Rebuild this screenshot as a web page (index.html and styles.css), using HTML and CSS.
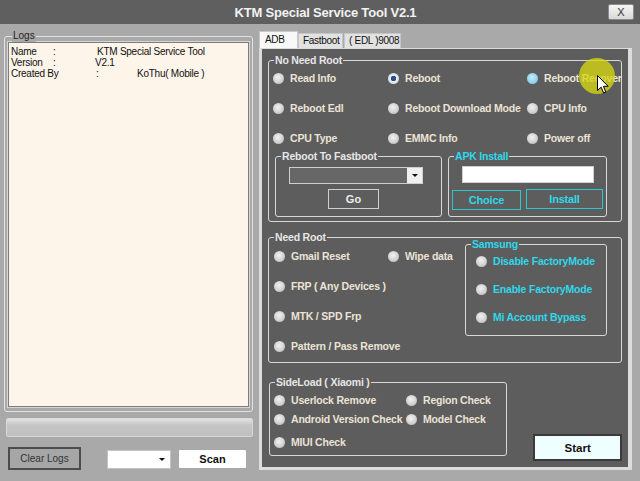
FILE: index.html
```html
<!DOCTYPE html>
<html>
<head>
<meta charset="utf-8">
<link rel="stylesheet" href="styles.css">
</head>
<body>
<div class="window">
  <div class="titlebar">
    <span class="title">KTM Special Service Tool V2.1</span>
    <div class="close">X</div>
  </div>
  <div class="main">
    <div class="left">
      <div class="logs-group">
        <span class="logs-legend">Logs</span>
        <div class="logs">
          <div class="lrow"><span class="w42">Name</span><span class="w44">:</span><span>KTM Special Service Tool</span></div>
          <div class="lrow"><span class="w42">Version</span><span class="w42">:</span><span>V2.1</span></div>
          <div class="lrow"><span class="w85">Created By</span><span class="w41">:</span><span>KoThu( Mobile )</span></div>
        </div>
      </div>
      <div class="progress"></div>
      <div class="bottombar">
        <div class="btn-clear">Clear Logs</div>
        <div class="combo-small"><span class="tri"></span></div>
        <div class="btn-scan">Scan</div>
      </div>
    </div>
    <div class="tabctl">
      <div class="tabstrip">
        <div class="tab active">ADB</div>
        <div class="tab t-fast">Fastboot</div>
        <div class="tab t-edl">( EDL )9008</div>
      </div>
      <div class="page">
        <div class="group g-nnr">
          <span class="legend">No Need Root</span>
          <div class="grid3">
            <div class="radio"><span class="rb"></span>Read Info</div>
            <div class="radio"><span class="rb sel"></span>Reboot</div>
            <div class="radio"><span class="rb hov"></span>Reboot Recover</div>
            <div class="radio"><span class="rb"></span>Reboot Edl</div>
            <div class="radio"><span class="rb"></span>Reboot Download Mode</div>
            <div class="radio"><span class="rb"></span>CPU Info</div>
            <div class="radio"><span class="rb"></span>CPU Type</div>
            <div class="radio"><span class="rb"></span>EMMC Info</div>
            <div class="radio"><span class="rb"></span>Power off</div>
          </div>
          <div class="subrow">
            <div class="group g-fast">
              <span class="legend">Reboot To Fastboot</span>
              <div class="combo"><span class="combo-btn"><span class="tri"></span></span></div>
              <div class="btn-go">Go</div>
            </div>
            <div class="group g-apk">
              <span class="legend cyan">APK Install</span>
              <div class="apk-input"></div>
              <div class="apk-btns">
                <div class="btn-cyan b-choice">Choice</div>
                <div class="btn-cyan b-install">Install</div>
              </div>
            </div>
          </div>
        </div>

        <div class="group g-root">
          <span class="legend">Need Root</span>
          <div class="root-list">
            <div class="rrow">
              <div class="radio c114"><span class="rb"></span>Gmail Reset</div>
              <div class="radio"><span class="rb"></span>Wipe data</div>
            </div>
            <div class="radio"><span class="rb"></span>FRP ( Any Devices )</div>
            <div class="radio"><span class="rb"></span>MTK / SPD Frp</div>
            <div class="radio"><span class="rb"></span>Pattern / Pass Remove</div>
          </div>
          <div class="group g-sam">
            <span class="legend cyan">Samsung</span>
            <div class="radio cyan"><span class="rb"></span>Disable FactoryMode</div>
            <div class="radio cyan"><span class="rb"></span>Enable FactoryMode</div>
            <div class="radio cyan"><span class="rb"></span>Mi Account Bypass</div>
          </div>
        </div>

        <div class="lastrow">
          <div class="group g-side">
            <span class="legend">SideLoad ( Xiaomi )</span>
            <div class="srow s1">
              <div class="radio c132"><span class="rb"></span>Userlock Remove</div>
              <div class="radio"><span class="rb"></span>Region Check</div>
            </div>
            <div class="srow s2">
              <div class="radio c132"><span class="rb"></span>Android Version Check</div>
              <div class="radio"><span class="rb"></span>Model Check</div>
            </div>
            <div class="srow s3">
              <div class="radio"><span class="rb"></span>MIUI Check</div>
            </div>
          </div>
          <div class="btn-start">Start</div>
        </div>
      </div>
    </div>
  </div>
  <div class="highlight"></div>
  <svg class="cursor" width="13" height="20" viewBox="0 0 13 20">
    <path d="M0.5 0.5 L0.5 15.5 L4.2 12.2 L6.6 18 L8.8 17 L6.4 11.3 L11.2 11.3 Z" fill="#fff" stroke="#000" stroke-width="1" stroke-linejoin="round"/>
  </svg>
</div>
</body>
</html>
```
FILE: styles.css
```css
* { box-sizing: border-box; margin: 0; padding: 0; }
body { width: 640px; height: 481px; overflow: hidden; font-family: "Liberation Sans", Arial, sans-serif; }

.window { position: relative; width: 640px; height: 481px; background: #a9a9a9; display: flex; flex-direction: column; }

.titlebar { height: 24px; flex: none; background: #5f5f5f; display: flex; align-items: center; padding-right: 6px; }
.title { flex: 1; text-align: center; padding-left: 43px; color: #f2f2f2; font-weight: bold; font-size: 13px; letter-spacing: -0.2px; }
.close { width: 26px; height: 16px; border: 1px solid #8c8c8c; border-radius: 2px; background: linear-gradient(#f6f6f6, #d8d8d8); font-size: 11px; color: #333; display: flex; align-items: center; justify-content: center; }

.main { flex: 1; display: flex; }

.left { width: 259px; flex: none; padding-left: 4px; padding-top: 12px; display: flex; flex-direction: column; }
.logs-group { position: relative; width: 249px; height: 376px; border: 1px solid #e2e2e2; border-radius: 3px; padding: 5px 0 0 3px; }
.logs-legend { position: absolute; top: -7px; left: 7px; padding: 0 1px; background: #a9a9a9; font-size: 10px; line-height: 12px; color: #222; }
.logs { width: 241px; height: 365px; background: #fdf4ea; border: 1px solid #7c7c7c; box-shadow: 0 0 0 1px #d6d6d6; padding: 3px 0 0 2px; font-size: 10px; line-height: 11px; color: #111; letter-spacing: -0.25px; }
.lrow { display: flex; white-space: nowrap; }
.w42 { width: 42px; } .w44 { width: 44px; } .w85 { width: 85px; } .w41 { width: 41px; }

.progress { margin: 6px 0 0 2px; width: 247px; height: 19px; border: 1px solid #d8d8d8; border-radius: 2px; background: linear-gradient(#e2e2e2, #c6c6c6 35%, #bfbfbf); }

.bottombar { display: flex; align-items: flex-start; margin-top: 10px; }
.btn-clear { margin-left: 4px; width: 73px; height: 23px; border: 2px solid #4c4c4c; background: #a6a6a6; color: #333; font-size: 10px; display: flex; align-items: center; justify-content: center; }
.combo-small { margin: 3px 0 0 26px; width: 64px; height: 19px; background: #fff; border: 1px solid #c4c4c4; position: relative; }
.combo-small .tri { position: absolute; right: 5px; top: 7px; }
.tri { display: block; width: 0; height: 0; border-left: 3px solid transparent; border-right: 3px solid transparent; border-top: 3px solid #111; }
.btn-scan { margin: 2px 0 0 7px; width: 69px; height: 20px; background: #fff; border: 1px solid #a8a8a8; border-radius: 2px; font-size: 11px; font-weight: bold; color: #111; display: flex; align-items: center; justify-content: center; }

.tabctl { width: 373px; flex: none; display: flex; flex-direction: column; padding-top: 7px; }
.tabstrip { display: flex; height: 17px; align-items: flex-end; }
.tab { height: 15px; border: 1px solid #c6c6c6; border-bottom: none; background: #e2e2e2; font-size: 10px; line-height: 14px; color: #111; padding-left: 4px; letter-spacing: -0.3px; }
.tab.active { width: 39px; height: 17px; background: #f8f8f8; padding-left: 5px; line-height: 15px; }
.t-fast { width: 45px; }
.t-edl { width: 57px; margin-left: 1px; }

.page { height: 422px; background: #5d5d5d; border: 3px solid #dcdcdc; border-top-width: 1px; border-right-width: 4px; padding: 11px 6px 0 6px; }

.group { position: relative; border: 1px solid #d8d8d8; border-radius: 3px; }
.legend { position: absolute; top: -7px; left: 5px; padding: 0 1px; background: #5d5d5d; color: #e6e6e6; font-weight: bold; font-size: 10.5px; line-height: 13px; letter-spacing: -0.2px; white-space: nowrap; }
.cyan { color: #2fd8ea; }

.radio { display: flex; align-items: center; height: 16px; gap: 6px; color: #ebe3d6; font-weight: bold; font-size: 10.5px; letter-spacing: -0.2px; white-space: nowrap; }
.radio.cyan { color: #2fd8ea; }
.rb { width: 11px; height: 11px; flex: none; border-radius: 50%; background: radial-gradient(circle at 45% 40%, #f2f2f2 0%, #d2d2d2 55%, #a8a8a8 100%); }
.rb.sel { background: radial-gradient(circle, #2b4f80 0 2.5px, #e8eef4 3px, #c8d0d8 100%); }
.rb.hov { background: radial-gradient(circle at 45% 40%, #c8ecfa 0%, #8fd2f0 60%, #6fb8dc 100%); }

.g-nnr { height: 162px; padding: 9px 0 0 4px; }
.grid3 { display: grid; grid-template-columns: 115px 139px 1fr; grid-auto-rows: 16px; row-gap: 14px; }
.subrow { display: flex; gap: 6px; margin: 10px 0 0 2px; }
.g-fast { width: 167px; height: 61px; }
.combo { margin: 10px 0 0 13px; width: 134px; height: 17px; border: 1px solid #cfcfcf; background: #676767; display: flex; justify-content: flex-end; }
.combo-btn { width: 15px; height: 15px; background: #f0f0f0; display: flex; align-items: center; justify-content: center; }
.btn-go { margin: 5px 0 0 52px; width: 51px; height: 20px; border: 1px solid #cfcfcf; color: #ececec; font-weight: bold; font-size: 11px; display: flex; align-items: center; justify-content: center; }
.g-apk { width: 159px; height: 61px; }
.apk-input { margin: 9px 0 0 13px; width: 132px; height: 17px; background: #fff; border: 1px solid #d0d0d0; }
.apk-btns { display: flex; gap: 5px; margin: 6px 0 0 3px; align-items: flex-start; }
.btn-cyan { height: 20px; border: 1px solid #2cc8cc; color: #2fd8ea; font-weight: bold; font-size: 11px; display: flex; align-items: center; justify-content: center; letter-spacing: -0.2px; }
.b-choice { width: 69px; margin-top: 1px; }
.b-install { width: 77px; }

.g-root { margin-top: 15px; height: 126px; display: flex; align-items: flex-start; }
.root-list { width: 196px; padding: 10px 0 0 5px; display: flex; flex-direction: column; gap: 14px; }
.rrow { display: flex; }
.c114 { width: 114px; }
.g-sam { margin-top: 6px; width: 142px; height: 92px; padding: 8px 0 0 10px; display: flex; flex-direction: column; gap: 12px; }

.lastrow { display: flex; align-items: flex-start; margin-top: 19px; }
.g-side { margin-left: 1px; width: 239px; height: 74px; padding: 9px 0 0 4px; }
.srow { display: flex; }
.s2 { margin-top: 3px; }
.s3 { margin-top: 7px; }
.c132 { width: 132px; }
.btn-start { margin: 52px 0 0 26px; width: 89px; height: 27px; background: #effefe; border: 2px solid #3a3a3a; color: #111; font-weight: bold; font-size: 11.5px; display: flex; align-items: center; justify-content: center; }

.highlight { position: absolute; left: 579px; top: 58px; width: 36px; height: 36px; border-radius: 50%; background: rgba(214, 214, 18, 0.78); }
.cursor { position: absolute; left: 597px; top: 75px; }
```
